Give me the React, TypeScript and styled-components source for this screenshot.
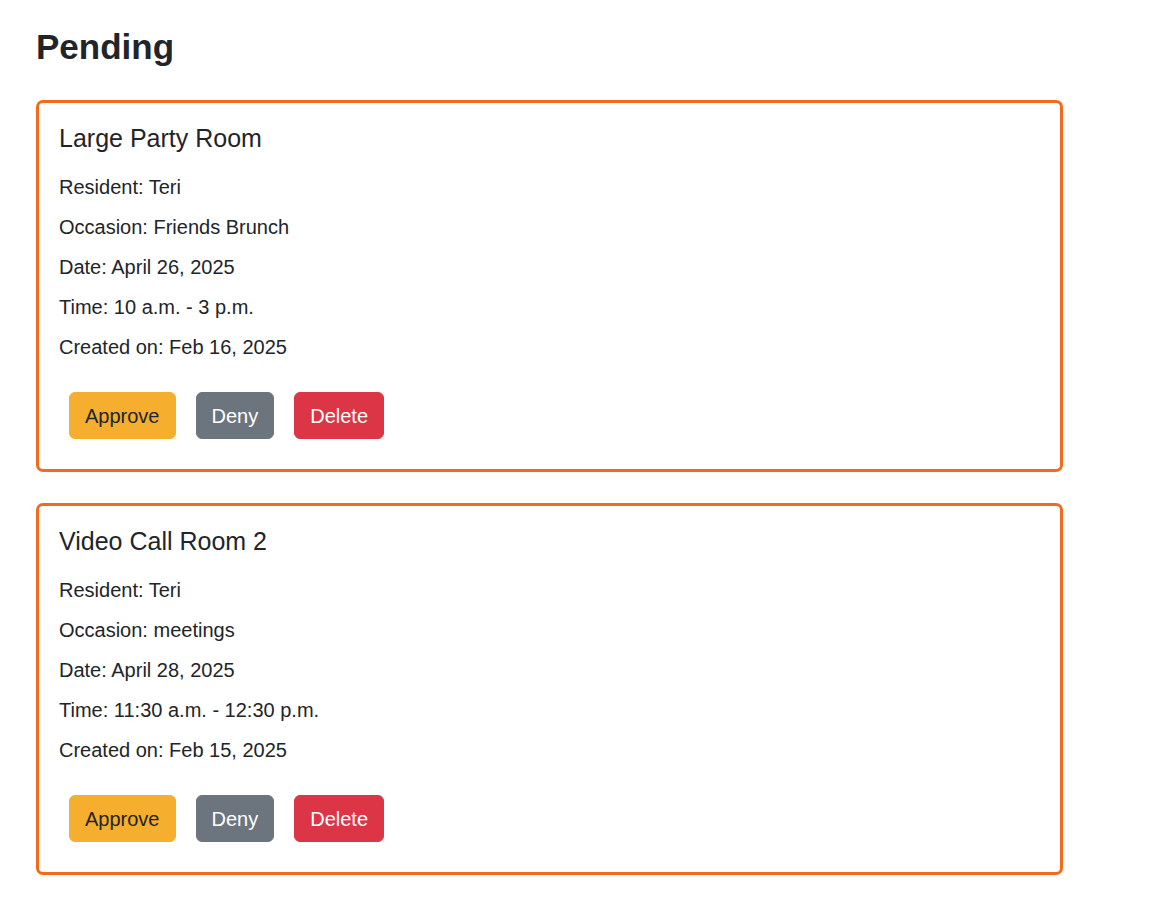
import React from "react";
import styled, { createGlobalStyle } from "styled-components";

const GlobalStyle = createGlobalStyle`
  html, body { margin: 0; padding: 0; background: #ffffff; }
  body {
    font-family: "Liberation Sans", Arial, sans-serif;
    color: #212529;
  }
  * { box-sizing: border-box; }
`;

const Page = styled.main`
  padding: 26px 36px 24px 36px;
  width: 1099px;
`;

const Heading = styled.h1`
  margin: 0 0 32px 0;
  font-size: 35px;
  font-weight: 700;
  line-height: 1.2;
  color: #212529;
`;

const List = styled.div`
  display: flex;
  flex-direction: column;
  gap: 31px;
`;

const Card = styled.section`
  border: 3px solid #f26b1d;
  border-radius: 7px;
  padding: 20px;
`;

const Title = styled.h2`
  margin: 0 0 19px 0;
  font-size: 25px;
  font-weight: 400;
  line-height: 1.2;
`;

const Line = styled.p`
  margin: 0 0 10px 0;
  font-size: 20px;
  line-height: 1.5;
`;

const Actions = styled.div`
  display: flex;
  gap: 20px;
  margin: 30px 0 10px 10px;
`;

type Variant = "approve" | "deny" | "delete";

const palette: Record<Variant, { bg: string; fg: string }> = {
  approve: { bg: "#f5ae2e", fg: "#212529" },
  deny: { bg: "#6c757d", fg: "#ffffff" },
  delete: { bg: "#dc3545", fg: "#ffffff" },
};

const Button = styled.button<{ $variant: Variant }>`
  font-family: inherit;
  font-size: 20px;
  line-height: 1.5;
  padding: 7.5px 15px;
  border: 1px solid ${(p) => palette[p.$variant].bg};
  border-radius: 6px;
  background: ${(p) => palette[p.$variant].bg};
  color: ${(p) => palette[p.$variant].fg};
  cursor: pointer;
`;

type Booking = {
  room: string;
  resident: string;
  occasion: string;
  date: string;
  time: string;
  created: string;
};

const bookings: Booking[] = [
  {
    room: "Large Party Room",
    resident: "Teri",
    occasion: "Friends Brunch",
    date: "April 26, 2025",
    time: "10 a.m. - 3 p.m.",
    created: "Feb 16, 2025",
  },
  {
    room: "Video Call Room 2",
    resident: "Teri",
    occasion: "meetings",
    date: "April 28, 2025",
    time: "11:30 a.m. - 12:30 p.m.",
    created: "Feb 15, 2025",
  },
];

export default function App() {
  return (
    <>
      <GlobalStyle />
      <Page>
        <Heading>Pending</Heading>
        <List>
          {bookings.map((b) => (
            <Card key={b.room}>
              <Title>{b.room}</Title>
              <Line>Resident: {b.resident}</Line>
              <Line>Occasion: {b.occasion}</Line>
              <Line>Date: {b.date}</Line>
              <Line>Time: {b.time}</Line>
              <Line>Created on: {b.created}</Line>
              <Actions>
                <Button $variant="approve">Approve</Button>
                <Button $variant="deny">Deny</Button>
                <Button $variant="delete">Delete</Button>
              </Actions>
            </Card>
          ))}
        </List>
      </Page>
    </>
  );
}
